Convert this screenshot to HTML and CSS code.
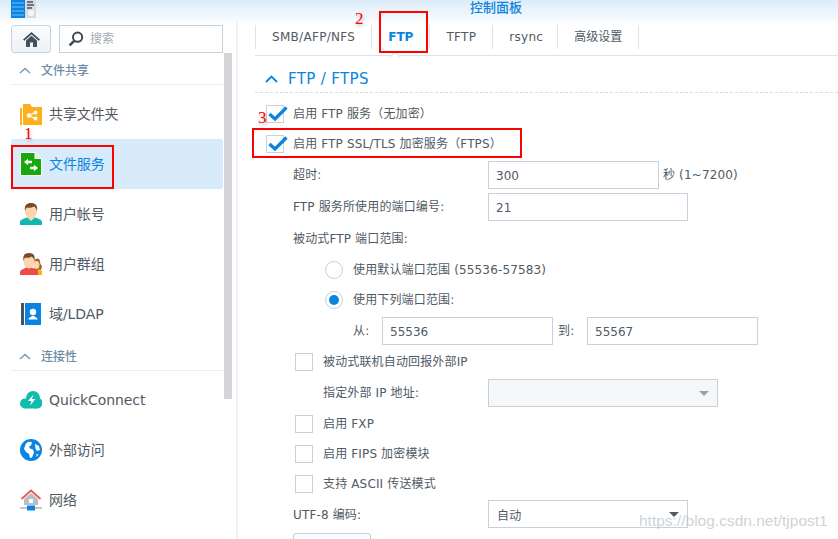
FILE: index.html
```html
<!DOCTYPE html>
<html lang="zh">
<head>
<meta charset="utf-8">
<title>控制面板</title>
<link rel="stylesheet" href="styles.css">
</head>
<body>
<div class="window">
  <header class="titlebar">
    <svg class="app-icon" width="25" height="19" viewBox="0 0 25 19"><rect x="0" y="0" width="14" height="18" fill="#0a84e0"/><path d="M1 3h12M1 7h12M1 11h12M1 15h12" stroke="#6fc3f7" stroke-width="1"/><rect x="14" y="0" width="11" height="18" fill="#d8dde2"/><path d="M16 2h6M16 5h7M16 8h5" stroke="#44525e" stroke-width="1.4"/><circle cx="20" cy="13" r="3" fill="#f4f6f8"/></svg>
    <span class="title">控制面板</span>
  </header>
  <div class="body">
    <aside class="sidebar">
      <div class="search-row">
        <button class="home"><svg width="17" height="15" viewBox="0 0 17 15"><path d="M8.500 0 17 7.500 15.600 8.800 8.500 2.600 1.400 8.800 0 7.500Z" fill="#44525f"/><path d="M3 8.600 8.500 3.800 14 8.600V15H10V10.500H7V15H3Z" fill="#44525f"/></svg></button>
        <div class="search"><svg width="16" height="16" viewBox="0 0 16 16"><circle cx="9.600" cy="6.200" r="4.600" fill="none" stroke="#3f4a54" stroke-width="2"/><path d="M6.200 9.800 1.600 14.400" stroke="#3f4a54" stroke-width="2.600"/></svg><span class="t">搜索</span></div>
      </div>
      <div class="nav-wrap">
        <nav class="nav">
          <div class="group"><svg class="chev" width="12" height="7" viewBox="0 0 12 7"><path d="M1 6 6 1.500 11 6" fill="none" stroke="#7d9ab4" stroke-width="1.600"/></svg><span class="t">文件共享</span></div>
          <a class="item"><svg width="22" height="21" viewBox="0 0 22 21"><rect x="0" y="4" width="2" height="17" fill="#fbb01c"/><path d="M3 0h7l2 3h10v18H3Z" fill="#fbb01c"/><g stroke="#fff" stroke-width="1.200" fill="#fff"><path d="M9 11.500 15 8.500M9 11.500l6 3" fill="none"/><circle cx="9" cy="11.500" r="1.600"/><circle cx="15.500" cy="8.500" r="1.400"/><circle cx="15.500" cy="14.500" r="1.400"/></g></svg><span class="t">共享文件夹</span></a>
          <a class="item active"><svg width="22" height="24" viewBox="0 0 22 24"><path d="M0 0h15l7 7v17H0Z" fill="#fff"/><path d="M1 1h13.500v6H21v16H1Z" fill="#16a90e"/><path d="M15.500 1 21 6.500h-5.500Z" fill="#dff3dd"/><path d="M4 10 8 6.800V8.800H12V11.200H8V13.200Z" fill="#fff"/><path d="M18 16 14 12.800V14.800H10V17.200H14V19.200Z" fill="#fff"/></svg><span class="t">文件服务</span></a>
          <a class="item"><svg width="22" height="22" viewBox="0 0 22 22"><path d="M0 22v-3c0-2 3-3 7-4.500h8c4 1.500 7 2.500 7 4.500v3Z" fill="#10b8ad"/><path d="M7 14.500 11 18l4-3.500Z" fill="#fcd5ac"/><ellipse cx="11" cy="8" rx="6" ry="7.500" fill="#fcd5ac"/><path d="M5 8C4 2 7 0 11 0s7 2 6 8c-1-3-2-4-3-4.500C12 5 8 5 7 4.500 6 5 5.500 6 5 8Z" fill="#7a4a26"/></svg><span class="t">用户帐号</span></a>
          <a class="item"><svg width="22" height="22" viewBox="0 0 22 22"><path d="M14 10c0-5 5-6 6-2 0 3 1 4 2 5l-2 9h-6Z" fill="#a0632e"/><path d="M15 21c0-3 3-4 5-5l2 2v4h-7Z" fill="#f9b419"/><ellipse cx="16.500" cy="12" rx="3" ry="4" fill="#fcd5ac"/><path d="M0 22v-3c0-2 4-3 6-4.500h6c2 1.500 6 2.500 6 4.500v3Z" fill="#f04b4b"/><ellipse cx="9" cy="8" rx="5.500" ry="7.500" fill="#fcd5ac"/><path d="M3.500 8C2.500 2 5 0 9 0s6.500 2 5.500 8c-1-3-2-4-3-4.500C10 5 7 5 5.500 4.500 4.500 5 4 6 3.500 8Z" fill="#7a4a26"/></svg><span class="t">用户群组</span></a>
          <a class="item"><svg width="22" height="22" viewBox="0 0 22 22"><rect x="1" y="0" width="3" height="22" fill="#44525f"/><rect x="5" y="0" width="16" height="22" fill="#0a84e0"/><circle cx="13" cy="9" r="3.200" fill="#fff"/><path d="M8.500 16.500c0-2 3-2.500 3-3.500h3c0 1 3 1.500 3 3.500Z" fill="#fff"/></svg><span class="t">域/LDAP</span></a>
          <div class="group"><svg class="chev" width="12" height="7" viewBox="0 0 12 7"><path d="M1 6 6 1.500 11 6" fill="none" stroke="#7d9ab4" stroke-width="1.600"/></svg><span class="t">连接性</span></div>
          <a class="item"><svg width="22" height="18" viewBox="0 0 22 18"><circle cx="5" cy="12.500" r="5" fill="#10bcae"/><circle cx="13" cy="7" r="7" fill="#10bcae"/><circle cx="17" cy="12" r="5.500" fill="#10bcae"/><rect x="5" y="10" width="12" height="7.500" fill="#10bcae"/><path d="M13.500 3.500 8 10h3.500L10 14.500l5.500-6.500H12Z" fill="#fff"/></svg><span>QuickConnect</span></a>
          <a class="item"><svg width="22" height="22" viewBox="0 0 22 22"><circle cx="11" cy="11" r="11" fill="#0a84e0"/><path d="M6 4.500c2-2 5-2 6-1l-1 3-2 1 1 2 3 1 1 3-2 5-2 .5-1-4-3-2-2-3 1-3Z" fill="#fff"/><path d="M15 5l4 2 1 4-3 1-1.500-2ZM16.500 15l2 .5-2 2.500Z" fill="#fff"/></svg><span class="t">外部访问</span></a>
          <a class="item"><svg width="22" height="22" viewBox="0 0 22 22"><path d="M4 10 11 4l7 6v6H4Z" fill="#b7c0c9"/><path d="M1.500 10 11 1.500 20.500 10" fill="none" stroke="#f25454" stroke-width="1.800"/><rect x="9" y="10" width="4" height="4" fill="#fff"/><rect x="0" y="18" width="22" height="1.800" fill="#b7c0c9"/><rect x="7" y="16.500" width="8" height="5" fill="#0a84e0"/></svg><span class="t">网络</span></a>
        </nav>
        <div class="scroll"><div class="thumb"></div></div>
      </div>
    </aside>
    <main class="main">
      <div class="tabs">
        <a class="tab">SMB/AFP/NFS</a>
        <a class="tab on">FTP</a>
        <a class="tab">TFTP</a>
        <a class="tab">rsync</a>
        <a class="tab"><span class="t">高级设置</span></a>
      </div>
      <h2 class="section"><svg width="13" height="8" viewBox="0 0 13 8"><path d="M1 7 6.500 1.500 12 7" fill="none" stroke="#0a84e0" stroke-width="1.800"/></svg>FTP / FTPS</h2>
      <div class="form">
        <label class="row check"><i class="box on"><svg width="20" height="17" viewBox="0 0 20 17"><path d="M1.500 9 7 14 18.500 2.500" fill="none" stroke="#0a84e0" stroke-width="3.200"/></svg></i><span class="t">启用 FTP 服务（无加密）</span></label>
        <label class="row check"><i class="box on"><svg width="20" height="17" viewBox="0 0 20 17"><path d="M1.500 9 7 14 18.500 2.500" fill="none" stroke="#0a84e0" stroke-width="3.200"/></svg></i><span class="t">启用 FTP SSL/TLS 加密服务（FTPS）</span></label>
        <div class="row field"><span class="lab t">超时:</span><span class="input w170">300</span><span class="after t">秒 (1~7200)</span></div>
        <div class="row field"><span class="lab t">FTP 服务所使用的端口编号:</span><span class="input w200">21</span></div>
        <div class="row field"><span class="t">被动式FTP 端口范围:</span></div>
        <label class="row radio"><i class="dot"></i><span class="t">使用默认端口范围 (55536-57583)</span></label>
        <label class="row radio"><i class="dot sel"></i><span class="t">使用下列端口范围:</span></label>
        <div class="row range"><span class="from t">从:</span><span class="input w170">55536</span><span class="to t">到:</span><span class="input w170">55567</span></div>
        <label class="row check sub"><i class="box"></i><span class="t">被动式联机自动回报外部IP</span></label>
        <div class="row ext"><span class="lab2 t">指定外部 IP 地址:</span><span class="select off"><i class="caret"></i></span></div>
        <label class="row check sub"><i class="box"></i><span class="t">启用 FXP</span></label>
        <label class="row check sub"><i class="box"></i><span class="t">启用 FIPS 加密模块</span></label>
        <label class="row check sub"><i class="box"></i><span class="t">支持 ASCII 传送模式</span></label>
        <div class="row enc"><span class="lab enc-t">UTF-8 编码:</span><span class="select w200"><span>自动</span><i class="caret dark"></i></span></div>
        <button class="more"></button>
      </div>
    </main>
  </div>
  <div class="mark m1"></div>
  <div class="mark m2"></div>
  <div class="mark m3"></div>
  <span class="num n1">1</span>
  <span class="num n2">2</span>
  <span class="num n3">3</span>
  <span class="water">https://blog.csdn.net/tjpost1</span>
</div>
</body>
</html>
```
FILE: styles.css
```css
* { box-sizing: border-box; }
html, body { margin: 0; padding: 0; background: #fff; }
.window {
  position: relative;
  width: 838px;
  height: 539px;
  overflow: hidden;
  font-family: "DejaVu Sans", "Noto Sans CJK SC", sans-serif;
  font-size: 12px;
  color: #505a64;
  background: #fff;
}
.t { margin-top: -3px; }
.group .t { margin-top: -1px; }
.enc-t { margin-top: -1px; }
.titlebar {
  height: 22px;
  background: linear-gradient(#dcecf9, #f9fcfe);
  display: flex;
  padding-left: 470px;
  position: relative;
}
.app-icon { position: absolute; left: 11px; top: 0; }
.title { color: #0a84e0; font-size: 13px; line-height: 16px; font-weight: 500; }
.body { display: grid; grid-template-columns: 238px 1fr; height: 517px; }
.sidebar { padding: 3px 0 0 11px; border-right: 2px solid #f0f2f4; }
.search-row { display: flex; gap: 8px; width: 212px; }
.home {
  width: 40px; height: 28px; padding: 0;
  border: 1px solid #c6d1dc; border-radius: 3px;
  background: linear-gradient(#fbfcfd, #eef2f6);
  display: flex; align-items: center; justify-content: center;
}
.search {
  flex: 1; height: 28px;
  border: 1px solid #c6d1dc;
  display: flex; align-items: center; gap: 6px; padding-left: 8px;
  color: #a3adb7;
}
.nav-wrap { display: flex; height: 489px; }
.nav { width: 212px; flex: none; }
.scroll { width: 8px; margin-left: 1px; }
.thumb { width: 8px; height: 346px; background: #d3d5d8; }
.group {
  height: 32px;
  margin-bottom: 4px;
  border-bottom: 1px solid #eaedf0;
  display: flex; align-items: center; gap: 10px;
  padding: 3px 0 0 8px;
  color: #6f8ba6;
  font-weight: 500;
  font-size: 12px;
}
.chev { flex: none; }
.item {
  height: 50px;
  display: flex; align-items: center;
  padding-left: 9px;
  border-radius: 3px;
  font-size: 14px;
  letter-spacing: -.1px;
  color: #505a64;
}
.item svg { flex: none; margin-right: 7px; }
.item.active { background: #d7ebfb; color: #0a84e0; }
.tabs {
  height: 34px;
  margin-left: 17px;
  padding-top: 3px;
  border-bottom: 1px solid #dfe3e8;
  display: flex;
  align-items: flex-start;
}
.tab {
  height: 24px;
  padding: 0 16px;
  border-left: 1px solid #dce3ea;
  display: flex; align-items: center;
  font-size: 12px;
  letter-spacing: .3px;
  color: #505a64;
}
.tab:nth-child(4) { padding-right: 14px; }
.tab:last-child { border-right: 1px solid #dce3ea; letter-spacing: 0; }
.tab.on { color: #0a84e0; font-weight: 700; letter-spacing: 0; position: relative; }
.tab.on::after {
  content: ""; position: absolute; left: 19px; top: 28px;
  width: 7px; height: 7px; background: #fff;
  border: 1px solid #dfe3e8; border-width: 1px 0 0 1px;
  transform: rotate(45deg);
}
.section {
  margin: 0 0 0 17px;
  height: 37px;
  border-bottom: 1px dashed #d5dce3;
  display: flex; align-items: center; gap: 10px;
  padding: 9px 0 0 10px;
  font-size: 15px;
  font-weight: 400;
  letter-spacing: .35px;
  color: #0a84e0;
}
.form { padding: 6px 0 0 28px; letter-spacing: .15px; }
.row { display: flex; align-items: center; height: 30px; }
.box {
  width: 18px; height: 18px; flex: none;
  border: 1px solid #c6d1dc;
  margin-right: 9px;
  position: relative;
}
.sub { padding-left: 29px; }
.sub .box { margin-right: 10px; }
.box.on svg { position: absolute; left: 1px; top: -1px; }
.field { padding-left: 27px; height: 32px; }
.enc { padding-left: 27px; }
.lab { width: 195px; flex: none; }
.input {
  height: 28px; flex: none;
  border: 1px solid #c6d1dc;
  display: flex; align-items: center;
  padding: 2px 0 0 7px;
  letter-spacing: 0;
}
.w170 { width: 171px; }
.w200 { width: 200px; }
.after { margin-left: 4px; }
.radio { padding-left: 59px; }
.dot {
  width: 18px; height: 18px; border-radius: 50%;
  border: 1px solid #c6d1dc; margin-right: 10px; flex: none;
  display: flex; align-items: center; justify-content: center;
}
.dot.sel::after { content: ""; width: 10px; height: 10px; border-radius: 50%; background: #0a84e0; }
.range { padding-left: 87px; height: 32px; }
.from { width: 29px; }
.to { width: 34px; padding-left: 5px; }
.ext { padding-left: 57px; height: 32px; }
.lab2 { width: 165px; flex: none; }
.select {
  height: 28px; flex: none; position: relative;
  border: 1px solid #c6d1dc;
  display: flex; align-items: center; padding-left: 8px;
}
.select.off { width: 230px; background: #f6f7f9; }
.caret {
  position: absolute; right: 8px; top: 11px;
  border-left: 5px solid transparent; border-right: 5px solid transparent;
  border-top: 5px solid #96a0aa;
}
.caret.dark { border-top-color: #505a64; }
.more {
  display: block; width: 78px; height: 28px; margin: 4px 0 0 27px;
  border: 1px solid #c6d1dc; border-radius: 3px;
  background: linear-gradient(#fbfcfd, #eef2f6);
}
.mark { position: absolute; border: 2px solid #f00; }
.m1 { left: 11px; top: 145px; width: 103px; height: 44px; }
.m2 { left: 379px; top: 11px; width: 49px; height: 42px; }
.m3 { left: 252px; top: 128px; width: 270px; height: 30px; }
.num {
  position: absolute; color: #f00;
  font-family: "Liberation Serif", serif; font-size: 17px; line-height: 16px;
  text-shadow: 1px 2px 3px rgba(120, 130, 140, .5);
}
.n1 { left: 24px; top: 126px; }
.n2 { left: 355px; top: 11px; }
.n3 { left: 258px; top: 110px; }
.water {
  position: absolute; left: 639px; top: 512px;
  font-family: "Liberation Sans", sans-serif; font-size: 15.500px;
  color: rgba(190, 195, 200, .75);
}
```
